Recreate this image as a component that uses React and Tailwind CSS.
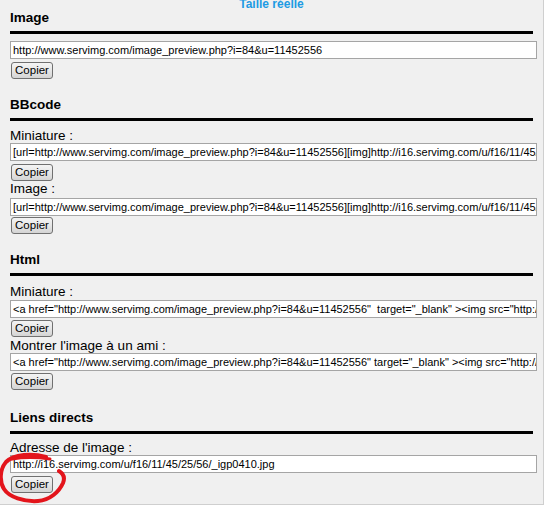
import React from 'react';

const FONT = { fontFamily: '"Liberation Sans", Arial, sans-serif' };

function Heading({ children, className = '' }) {
  return (
    <div className={className}>
      <div className="h-[16px] text-[13.5px] leading-[16px] font-bold text-black">{children}</div>
      <div className="mt-[5px] h-[3px] w-[523px] bg-black" />
    </div>
  );
}

function Field({ value, className = '' }) {
  return (
    <div
      className={`h-[18px] w-[527px] overflow-hidden whitespace-pre border border-[#a5a5a5] bg-white pl-[2px] text-[11px] leading-[16px] text-black ${className}`}
    >
      {value}
    </div>
  );
}

function CopyButton({ className = '' }) {
  return (
    <button
      type="button"
      className={`ml-px flex h-[17px] w-[42px] items-center justify-center rounded-[3px] border border-[#707070] bg-gradient-to-b from-[#f4f4f4] via-[#e6e6e6] to-[#d4d4d4] text-[11.5px] leading-none text-black ${className}`}
    >
      Copier
    </button>
  );
}

function Label({ children, className = '' }) {
  return <div className={`h-[14px] text-[13.5px] leading-[14px] text-black ${className}`}>{children}</div>;
}

export default function App() {
  const imgUrl = 'http://www.servimg.com/image_preview.php?i=84&u=11452556';
  const bbcode = '[url=http://www.servimg.com/image_preview.php?i=84&u=11452556][img]http://i16.servimg.com/u/f16/11/45/25/56/_igp0410.jpg[/img][/url]';
  const html1 = '<a href="http://www.servimg.com/image_preview.php?i=84&u=11452556"  target="_blank" ><img src="http://i16.servimg.com/u/f16/11/45/25/56/_igp0410.jpg" /></a>';
  const html2 = '<a href="http://www.servimg.com/image_preview.php?i=84&u=11452556" target="_blank" ><img src="http://i16.servimg.com/u/f16/11/45/25/56/_igp0410.jpg" /></a>';
  const direct = 'http://i16.servimg.com/u/f16/11/45/25/56/_igp0410.jpg';

  return (
    <div className="min-h-[510px] bg-white" style={FONT}>
      <div className="relative h-[505px] w-[544px] overflow-hidden border-r border-b border-[#cfcfcf] bg-[#f0f0f0] pl-[10px]">
        <div className="-mt-[3px] h-[14px] pr-[10px] text-center text-[12px] font-bold leading-[14px] text-[#1d9be3]">
          Taille réelle
        </div>

        {/* Image */}
        <Heading className="-mt-px">Image</Heading>
        <Field value={imgUrl} className="mt-[7px]" />
        <CopyButton className="mt-[3px]" />

        {/* BBcode */}
        <Heading className="mt-[18px]">BBcode</Heading>
        <Label className="mt-[8px]">Miniature :</Label>
        <Field value={bbcode} />
        <CopyButton className="mt-[3px]" />
        <Label className="mt-[1px]">Image :</Label>
        <Field value={bbcode} className="mt-[2px]" />
        <CopyButton className="mt-px" />

        {/* Html */}
        <Heading className="mt-[18px]">Html</Heading>
        <Label className="mt-[9px]">Miniature :</Label>
        <Field value={html1} className="mt-[1px]" />
        <CopyButton className="mt-[2px]" />
        <Label className="mt-[2px]">Montrer l'image à un ami :</Label>
        <Field value={html2} />
        <CopyButton className="mt-[2px]" />

        {/* Liens directs */}
        <Heading className="mt-[20px]">Liens directs</Heading>
        <Label className="mt-[7px]">Adresse de l'image :</Label>
        <Field value={direct} />
        <CopyButton className="mt-[3px]" />

        {/* red annotation circle */}
        <svg
          className="pointer-events-none absolute left-0 top-[451px]"
          width="72"
          height="54"
          viewBox="0 0 72 54"
          fill="none"
        >
          <path
            d="M46 6 C32 2, 14 3, 6 11 C0 18, -1 30, 4 38 C9 46, 24 51, 38 50 C50 49, 59 41, 63 32 C65 27, 64 23, 59 20"
            stroke="#e3141b"
            strokeWidth="4"
            strokeLinecap="round"
          />
          <path d="M12 8 C24 6, 36 6, 50 8" stroke="#e3141b" strokeWidth="3" strokeLinecap="round" />
        </svg>
      </div>
    </div>
  );
}
